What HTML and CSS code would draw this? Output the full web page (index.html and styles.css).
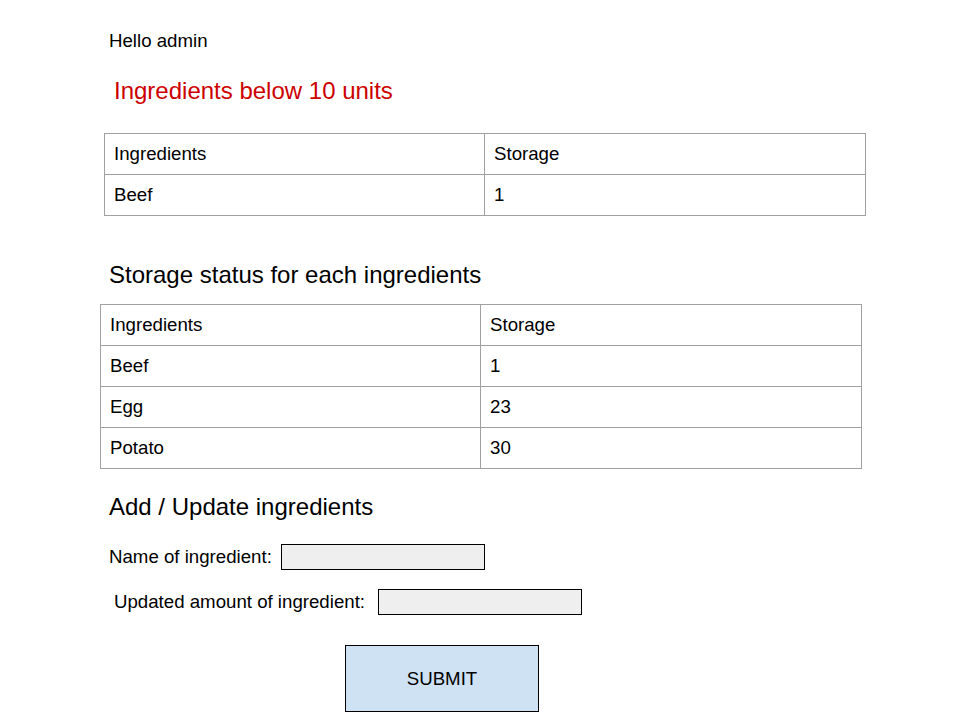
FILE: index.html
```html
<!DOCTYPE html>
<html>
<head>
<meta charset="utf-8">
<title>Ingredients</title>
<link rel="stylesheet" href="styles.css">
</head>
<body>
<main class="page">
  <p class="greet">Hello admin</p>
  <h1 class="alert">Ingredients below 10 units</h1>
  <div class="grid grid-low">
    <div class="cell">Ingredients</div><div class="cell">Storage</div>
    <div class="cell">Beef</div><div class="cell">1</div>
  </div>
  <h2 class="title title-status">Storage status for each ingredients</h2>
  <div class="grid grid-all">
    <div class="cell">Ingredients</div><div class="cell">Storage</div>
    <div class="cell">Beef</div><div class="cell">1</div>
    <div class="cell">Egg</div><div class="cell">23</div>
    <div class="cell">Potato</div><div class="cell">30</div>
  </div>
  <h2 class="title title-form">Add / Update ingredients</h2>
  <form class="form">
    <label class="row row-name">Name of ingredient:<input class="field" type="text"></label>
    <label class="row row-amount">Updated amount of ingredient:<input class="field" type="text"></label>
    <button class="submit" type="button">SUBMIT</button>
  </form>
</main>
</body>
</html>
```
FILE: styles.css
```css
html, body {
  margin: 0;
  padding: 0;
  background: #ffffff;
}
.page {
  font-family: "Liberation Sans", Arial, sans-serif;
  color: #000000;
  display: flex;
  flex-direction: column;
  align-items: flex-start;
  width: 960px;
}
.greet {
  margin: 30px 0 0 109px;
  font-size: 18.67px;
  line-height: 22px;
}
.alert {
  margin: 25px 0 0 114px;
  font-size: 24px;
  line-height: 28px;
  font-weight: normal;
  color: #cc0000;
}
.grid {
  display: grid;
  grid-template-columns: 380px 381px;
  border-top: 1px solid #a0a0a0;
  border-left: 1px solid #a0a0a0;
}
.grid-low {
  margin: 28px 0 0 104px;
}
.grid-all {
  margin: 15px 0 0 100px;
}
.cell {
  box-sizing: border-box;
  height: 41px;
  border-right: 1px solid #a0a0a0;
  border-bottom: 1px solid #a0a0a0;
  padding-left: 9px;
  display: flex;
  align-items: center;
  font-size: 18.67px;
  line-height: 22px;
}
.title {
  font-size: 24px;
  line-height: 28px;
  font-weight: normal;
  margin: 0;
}
.title-status {
  margin: 45px 0 0 109px;
}
.title-form {
  margin: 24px 0 0 109px;
}
.form {
  display: flex;
  flex-direction: column;
  align-items: flex-start;
  margin: 23px 0 0 0;
}
.row {
  display: flex;
  align-items: center;
  font-size: 18.67px;
  line-height: 22px;
}
.row-name {
  margin-left: 109px;
  gap: 9px;
}
.row-amount {
  margin: 19px 0 0 114px;
  gap: 13px;
}
.field {
  box-sizing: border-box;
  width: 204px;
  height: 26px;
  margin: 0;
  padding: 0;
  border: 1px solid #000000;
  border-radius: 0;
  background: #efefef;
}
.submit {
  box-sizing: border-box;
  margin: 30px 0 0 345px;
  width: 194px;
  height: 67px;
  background: #cfe2f3;
  border: 1px solid #000000;
  border-radius: 0;
  font-family: "Liberation Sans", Arial, sans-serif;
  font-size: 18.67px;
  color: #000000;
  padding: 0;
}
```
